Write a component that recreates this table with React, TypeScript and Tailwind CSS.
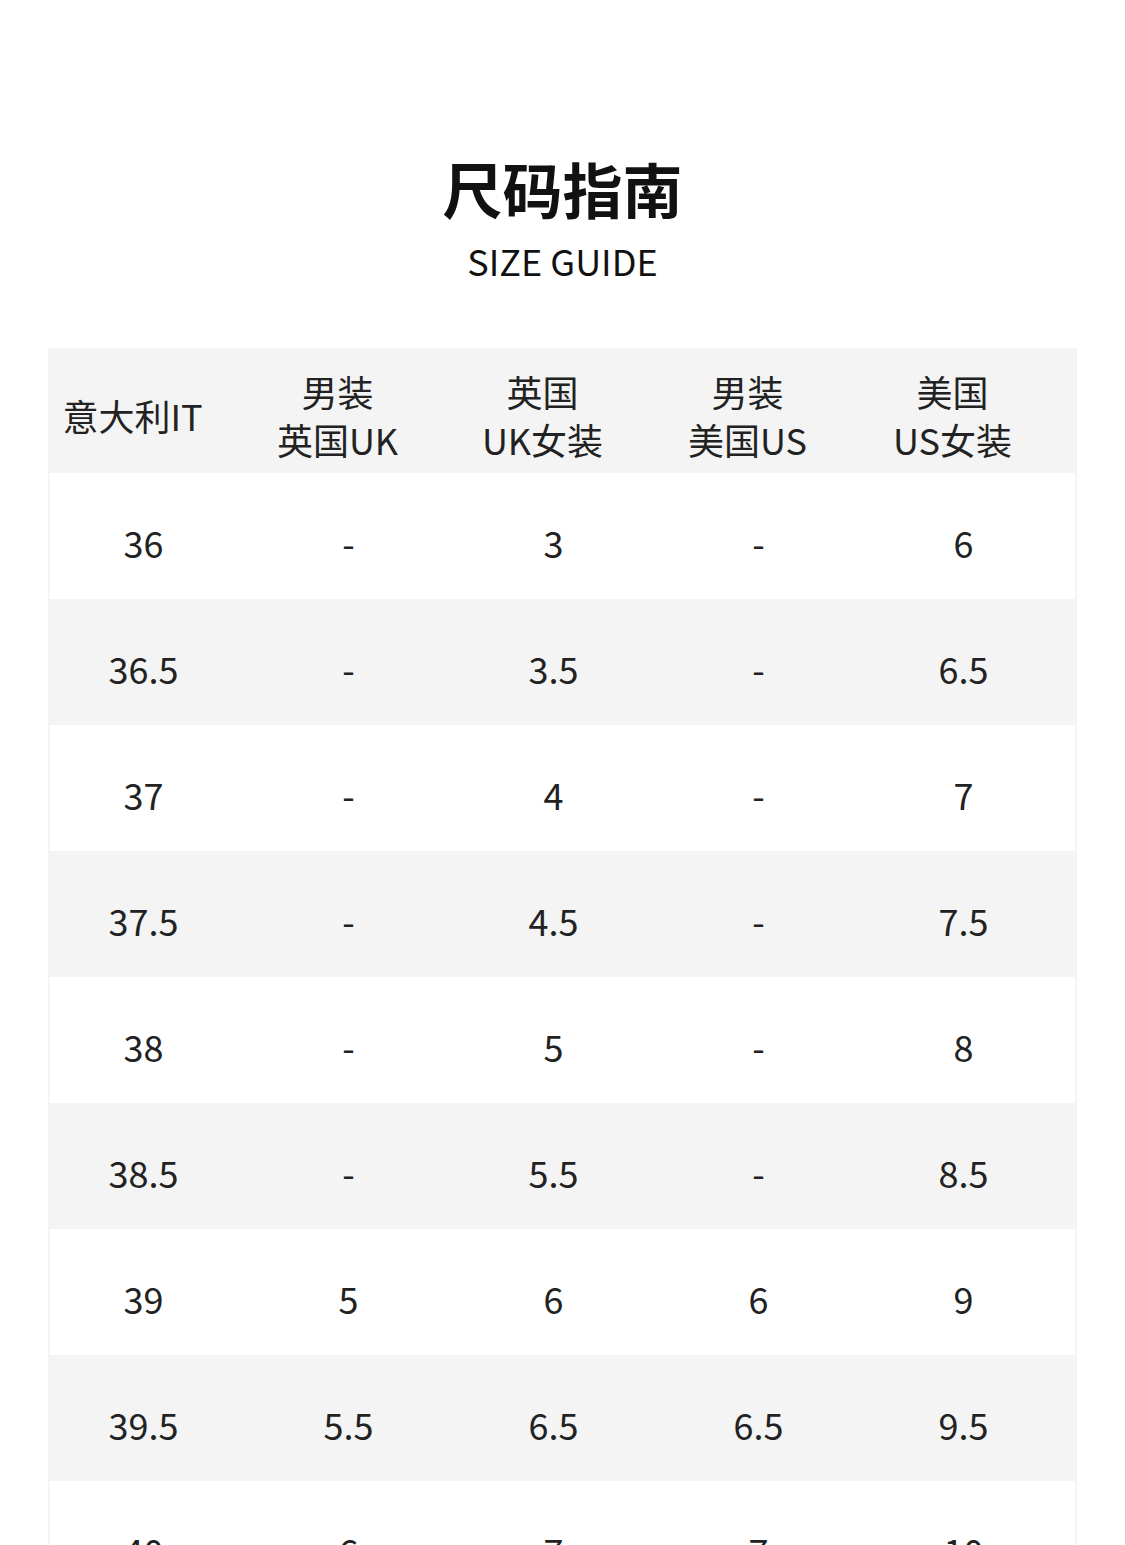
const headers: string[][] = [
  ["意大利IT"],
  ["男装", "英国UK"],
  ["英国", "UK女装"],
  ["男装", "美国US"],
  ["美国", "US女装"],
];

const rows: string[][] = [
  ["36", "-", "3", "-", "6"],
  ["36.5", "-", "3.5", "-", "6.5"],
  ["37", "-", "4", "-", "7"],
  ["37.5", "-", "4.5", "-", "7.5"],
  ["38", "-", "5", "-", "8"],
  ["38.5", "-", "5.5", "-", "8.5"],
  ["39", "5", "6", "6", "9"],
  ["39.5", "5.5", "6.5", "6.5", "9.5"],
  ["40", "6", "7", "7", "10"],
];

export default function App() {
  return (
    <div className="w-[1125px] h-[1545px] overflow-hidden bg-white font-['Noto_Sans_CJK_SC',sans-serif] text-[#222]">
      <div className="flex flex-col items-center pt-[148px]">
        <h1 className="text-[60px] leading-[80px] font-bold text-[#111]">尺码指南</h1>
        <p className="text-[36px] leading-[52px] mt-[6px] text-[#111]">SIZE GUIDE</p>
      </div>

      <div className="mx-[48px] mt-[62px] bg-[#f4f4f4] px-[2px]">
        {/* header */}
        <div className="h-[125px] -ml-[20px] grid grid-cols-[repeat(5,205px)] items-center pt-[8px]">
          {headers.map((h, i) => (
            <div key={i} className="text-center text-[36px] leading-[48px]">
              {h.map((l) => (
                <div key={l}>{l}</div>
              ))}
            </div>
          ))}
        </div>
        {rows.map((r, i) => (
          <div key={i} className={`h-[126px] ${i % 2 === 0 ? "bg-white" : ""}`}>
            <div className="h-full -ml-[9px] grid grid-cols-[repeat(5,205px)] items-center pt-[12px]">
              {r.map((c, j) => (
                <div key={j} className="text-center text-[36px] leading-[48px]">
                  {c}
                </div>
              ))}
            </div>
          </div>
        ))}
      </div>
    </div>
  );
}
